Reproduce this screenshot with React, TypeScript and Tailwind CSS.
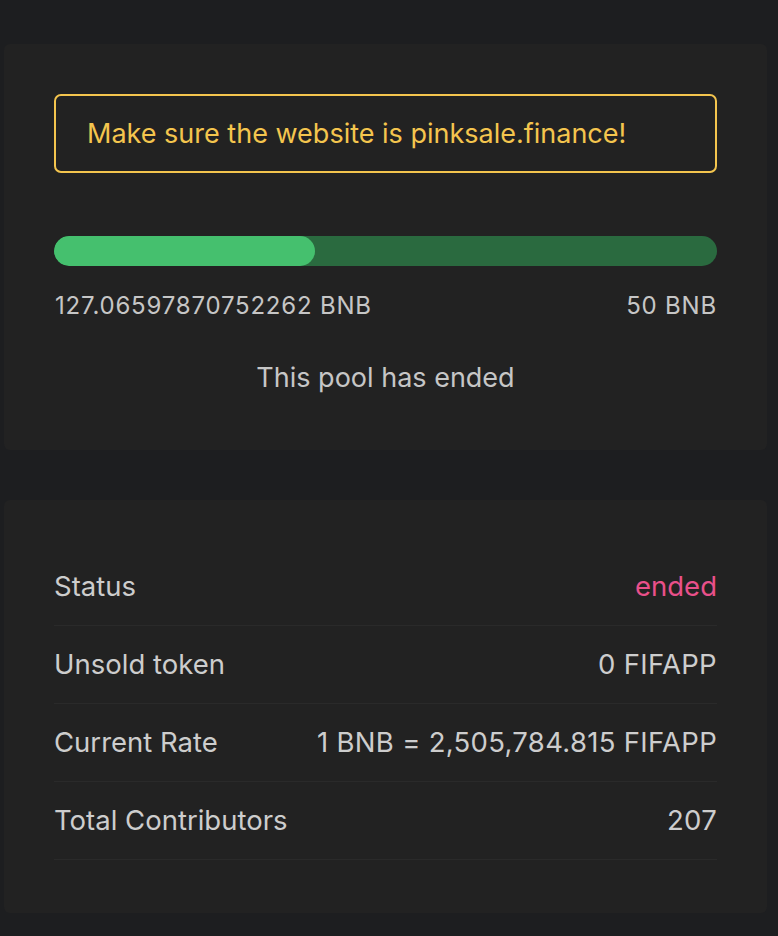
const rows = [
  { label: "Status", value: "ended", pink: true },
  { label: "Unsold token", value: "0 FIFAPP" },
  { label: "Current Rate", value: "1 BNB = 2,505,784.815 FIFAPP" },
  { label: "Total Contributors", value: "207" },
];

const App = () => {
  const raised = 39.4;

  return (
    <div
      className="min-h-[936px] bg-[#1d1e20] pl-[4px] pr-[11px] pt-[44px] pb-[26px] flex flex-col gap-[50px]"
      style={{ fontFamily: "Inter, Roboto, sans-serif" }}
    >
      <div className="bg-[#222222] rounded-[6px] px-[50px] pt-[50px] pb-[56px]">
        <div className="border-2 border-[#f4c54e] rounded-[7px] h-[79px] flex items-center px-[31px]">
          <span className="text-[#f4c54e] text-[27px] leading-[34px]">
            Make sure the website is pinksale.finance!
          </span>
        </div>
        <div className="mt-[63px] h-[30px] rounded-full bg-[#2a6a3f] overflow-hidden">
          <div
            className="h-full rounded-full bg-[#45c06e]"
            style={{ width: `${raised}%` }}
          />
        </div>
        <div className="mt-[26px] flex justify-between text-[24px] tracking-[0.8px] text-[#c6c6c6] leading-[28px]">
          <span className="pl-[1px]">127.06597870752262 BNB</span>
          <span>50 BNB</span>
        </div>
        <div className="mt-[42px] text-center text-[27px] text-[#c6c6c6] leading-[32px]">
          This pool has ended
        </div>
      </div>

      <div className="bg-[#222222] rounded-[6px] px-[50px] pt-[48px] pb-[53px]">
        {rows.map((row) => (
          <div
            key={row.label}
            className="h-[78px] flex items-center justify-between border-b border-[#2a2a2a] text-[27.5px]"
          >
            <span className="text-[#cdcdcd]">{row.label}</span>
            <span
              className={
                row.pink
                  ? "text-[#e9508a]"
                  : "text-[#cdcdcd] tracking-[0.3px]"
              }
            >
              {row.value}
            </span>
          </div>
        ))}
      </div>
    </div>
  );
};

export default App;
